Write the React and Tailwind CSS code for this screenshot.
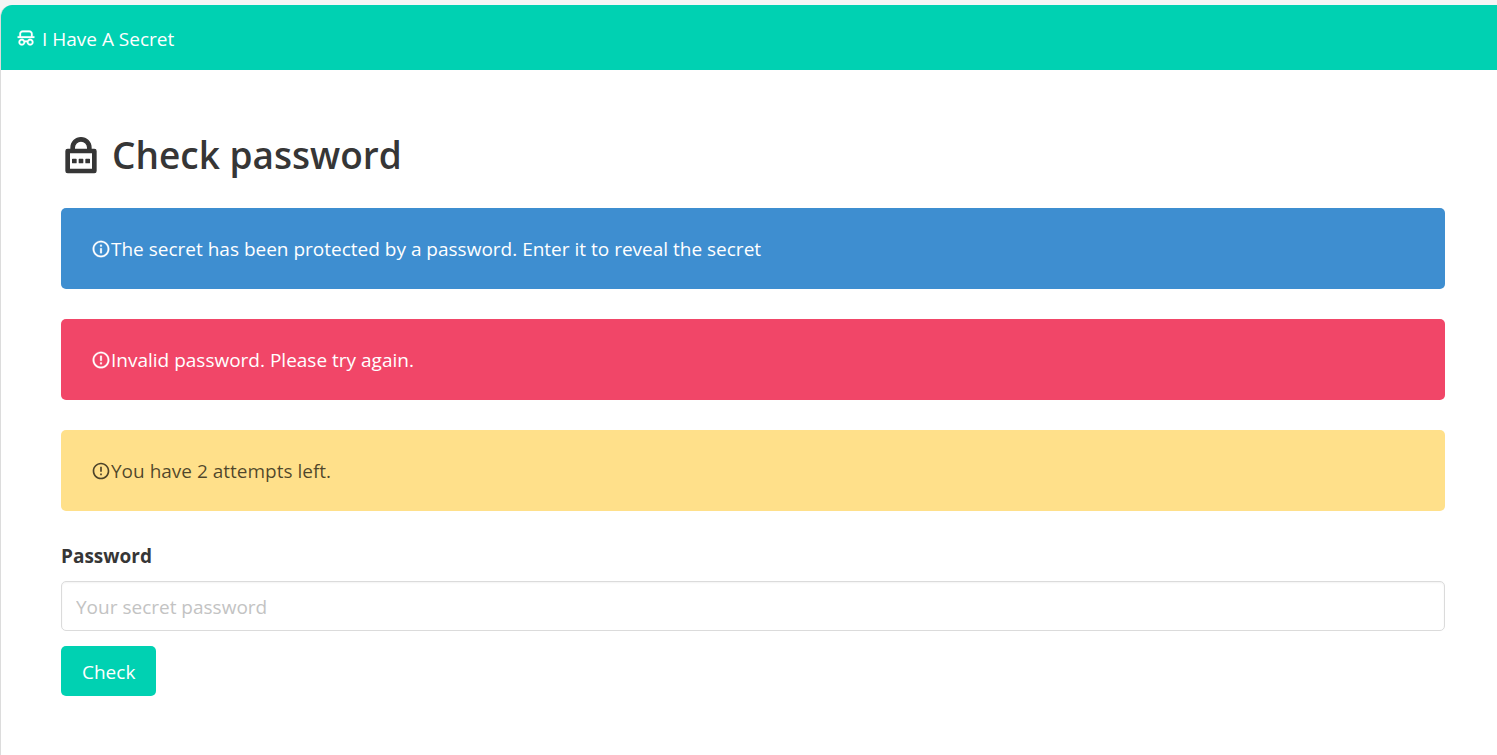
import { RiErrorWarningLine, RiInformationLine, RiLockPasswordLine, RiSpyLine } from "react-icons/ri";

function Notice({ icon: Icon, className, iconClassName = "", children }) {
  return (
    <div className={`mb-[30px] flex items-center rounded-[5px] px-[30px] py-[25px] ${className}`}>
      <Icon className={`size-5 shrink-0 ${iconClassName}`} aria-hidden="true" />
      <p className="pt-0.5 leading-[29px]">{children}</p>
    </div>
  );
}

export default function App() {
  return (
    <div className="min-h-screen bg-[#f5f5f5] pt-[5px] font-['Open_Sans','Noto_Sans',sans-serif] text-[19px] leading-[31px] text-[#4a4a4a]">
      <div className="min-h-[calc(100vh-5px)] overflow-hidden rounded-tl-xl border-l border-[#dcdcdc] bg-white">
        <nav className="flex h-[65px] items-center bg-[#00d1b2] px-[15px] text-white">
          <a href="#" className="flex items-center gap-[6px] pt-1">
            <RiSpyLine className="mb-1 size-5 stroke-current stroke-[0.3px]" aria-hidden="true" />
            I Have A Secret
          </a>
        </nav>
        <main className="pt-[60px] pr-[52px] pb-[60px] pl-[60px]">
          <h1 className="mb-[30px] flex h-12 items-center gap-[11px] text-[37px] leading-[48px] font-semibold text-[#363636]">
            <RiLockPasswordLine
              className="mt-1 size-10 stroke-current stroke-[0.8px]"
              strokeLinejoin="round"
              aria-hidden="true"
            />
            <span className="pt-0.5">Check password</span>
          </h1>
          <Notice
            icon={RiInformationLine}
            className="bg-[#3e8ed0] text-white"
            iconClassName="stroke-current stroke-[0.3px]"
          >
            The secret has been protected by a password. Enter it to reveal the secret
          </Notice>
          <Notice
            icon={RiErrorWarningLine}
            className="bg-[#f14668] text-white"
            iconClassName="stroke-current stroke-[0.3px]"
          >
            Invalid password. Please try again.
          </Notice>
          <Notice icon={RiErrorWarningLine} className="bg-[#ffe08a] text-black/70">
            You have 2 attempts left.
          </Notice>
          <form onSubmit={(event) => event.preventDefault()}>
            <label htmlFor="password" className="mb-[9px] block leading-[31px] font-bold text-[#363636]">
              Password
            </label>
            <input
              id="password"
              type="password"
              placeholder="Your secret password"
              className="block h-[50px] w-full rounded-[5px] border border-[#dbdbdb] bg-white px-[14px] pt-0.5 text-[#363636] shadow-[inset_0_1px_2px_rgba(10,10,10,0.05)] placeholder:text-[#c3c3c3]"
            />
            <button type="submit" className="mt-[15px] h-[50px] rounded-[5px] bg-[#00d1b2] px-[21px] pt-0.5 text-white">
              Check
            </button>
          </form>
        </main>
      </div>
    </div>
  );
}
